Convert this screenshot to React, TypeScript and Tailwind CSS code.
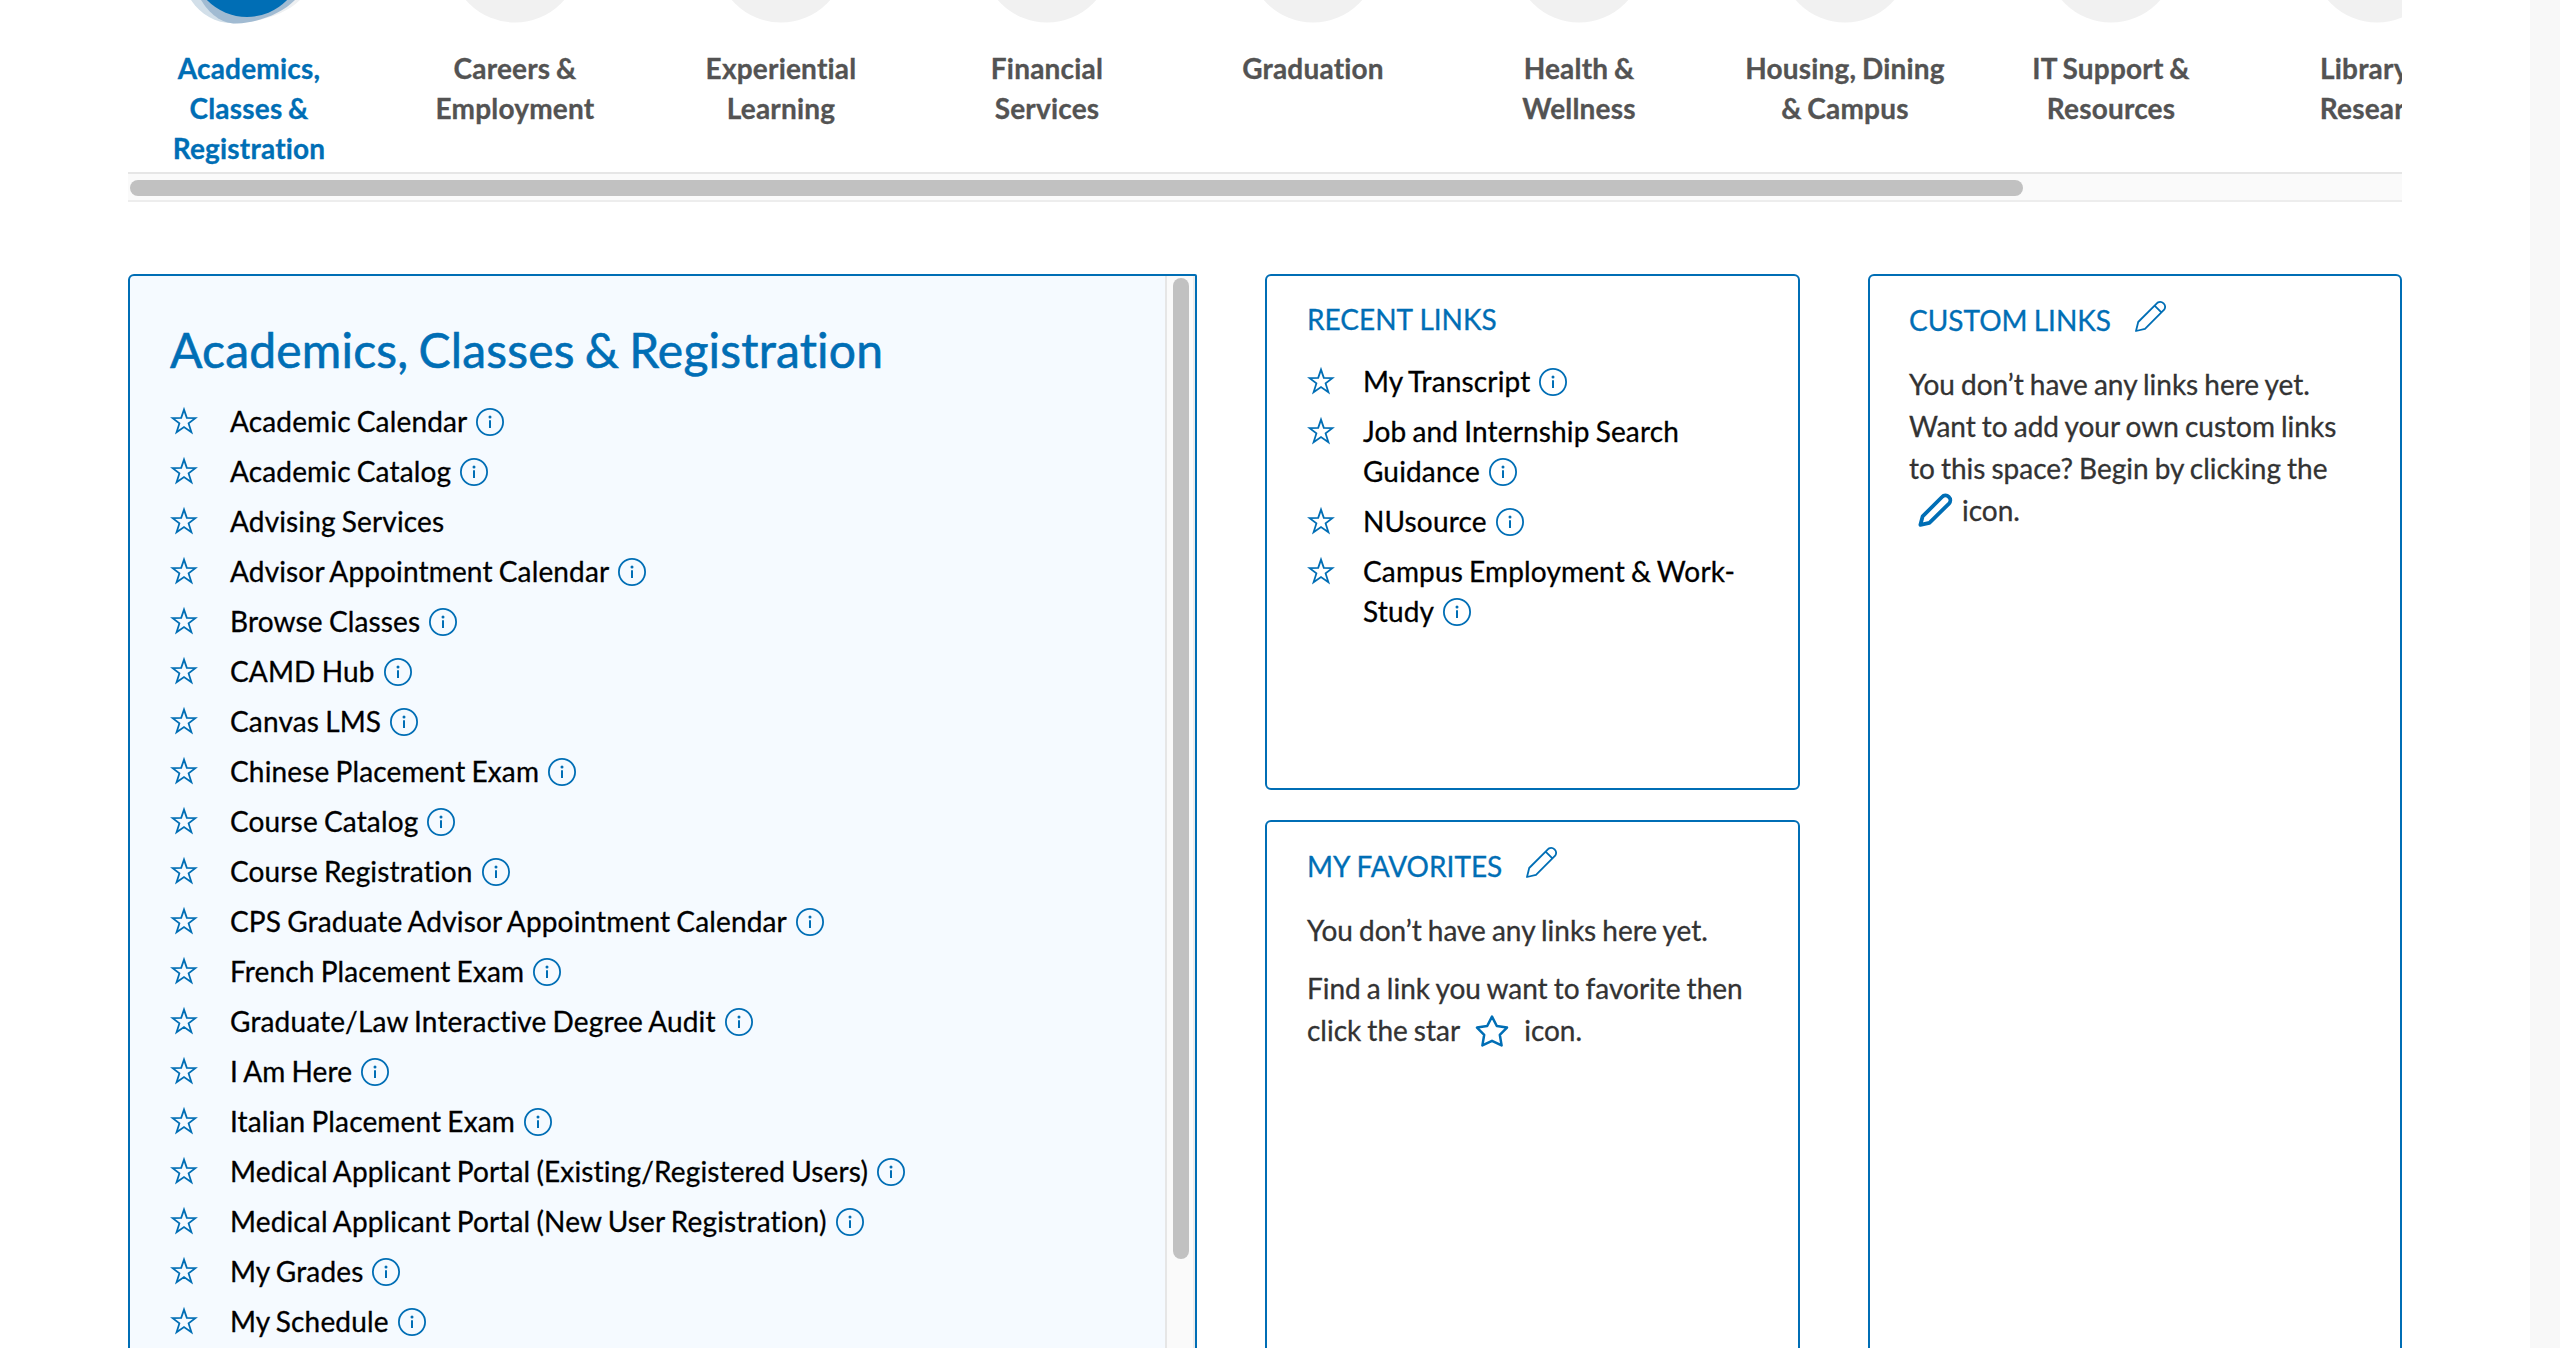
import React from "react";

const tabs = [
  ["Academics,", "Classes &", "Registration"],
  ["Careers &", "Employment"],
  ["Experiential", "Learning"],
  ["Financial", "Services"],
  ["Graduation"],
  ["Health &", "Wellness"],
  ["Housing, Dining", "& Campus"],
  ["IT Support &", "Resources"],
  ["Library &", "Research"],
];

const links: [string, boolean][] = [
  ["Academic Calendar", true],
  ["Academic Catalog", true],
  ["Advising Services", false],
  ["Advisor Appointment Calendar", true],
  ["Browse Classes", true],
  ["CAMD Hub", true],
  ["Canvas LMS", true],
  ["Chinese Placement Exam", true],
  ["Course Catalog", true],
  ["Course Registration", true],
  ["CPS Graduate Advisor Appointment Calendar", true],
  ["French Placement Exam", true],
  ["Graduate/Law Interactive Degree Audit", true],
  ["I Am Here", true],
  ["Italian Placement Exam", true],
  ["Medical Applicant Portal (Existing/Registered Users)", true],
  ["Medical Applicant Portal (New User Registration)", true],
  ["My Grades", true],
  ["My Schedule", true],
];

const recent = [
  ["My Transcript"],
  ["Job and Internship Search", "Guidance"],
  ["NUsource"],
  ["Campus Employment & Work-", "Study"],
];

function Star() {
  return (
    <svg className="mt-[5px] h-[30px] w-7 shrink-0" viewBox="0 0 28 30" fill="none" stroke="#006eb5" strokeWidth="1.8">
      <path d="M14 3.6 L16.8 11.9 L25.4 12.1 L18.6 17.4 L21.4 26.2 L14 21 L6.6 26.2 L9.4 17.4 L2.6 12.1 L11.2 11.9 Z" />
    </svg>
  );
}

function Info() {
  return (
    <svg className="ml-[9px] inline-block h-7 w-7 align-[-4px]" viewBox="0 0 28 28" fill="none">
      <circle cx="14" cy="14" r="13.1" stroke="#006eb5" strokeWidth="1.8" />
      <circle cx="14" cy="9" r="1.5" fill="#006eb5" />
      <path d="M14 12.3V20" stroke="#006eb5" strokeWidth="2" />
    </svg>
  );
}

function Pencil() {
  return (
    <svg className="h-8 w-8 shrink-0" viewBox="0 0 32 32" fill="none" stroke="#006eb5" strokeWidth="1.8" strokeLinejoin="round">
      <path d="M1 31 L3.2 22 L22.6 2.6 A5 5 0 0 1 29.4 9.4 L10 28.8 Z M19.6 5.6 L26.4 12.4" />
    </svg>
  );
}

function Row({ lines, info, narrow }: { lines: string[]; info: boolean; narrow?: boolean }) {
  return (
    <li className="mb-[10px] flex">
      <Star />
      <span className={narrow ? "ml-7 whitespace-nowrap leading-[40px] text-black" : "ml-8 whitespace-nowrap leading-[40px] text-black"}>
        {lines.map((l, i) => (
          <span key={l} className="block">
            {l}
            {info && i === lines.length - 1 && <Info />}
          </span>
        ))}
      </span>
    </li>
  );
}

export default function App() {
  return (
    <div className="flex h-[1348px] w-[2560px] overflow-hidden bg-white font-['Lato',sans-serif] text-[28px] text-[#333] [-webkit-text-stroke:0.3px] [font-variant-ligatures:none]">
      <main className="flex h-[1348px] w-[2530px] flex-col overflow-hidden pl-32">
        <div className="h-[172px] w-[2274px] shrink-0 overflow-hidden">
          <div className="flex w-[2420px] gap-6">
            {tabs.map((t, i) => (
              <div key={t[0]} className="flex w-[242px] shrink-0 flex-col items-center">
                <svg className="h-12 w-[140px]" viewBox="0 0 140 48">
                  {i === 0 ? (
                    <>
                      <path d="M12 0 C22 15 38 24 56 23.2 C78 22 98 12 110 0 Z" fill="#d2dfe9" />
                      <path d="M30 0 C40 15 52 24 66 22.5 C88 20 109 12 121 0 Z" fill="#eef0f2" />
                      <path d="M22 0 C30 13 42 24 58 23.6 C82 22 103 13 116 0 Z" fill="#a1bbd2" />
                      <circle cx="68" cy="-39" r="56" fill="#006eb5" />
                    </>
                  ) : (
                    <circle cx="70" cy="-42.5" r="65" fill="#f1f1f1" />
                  )}
                </svg>
                <div className={i === 0 ? "text-center font-bold leading-[40px] tracking-[0.2px] text-[#006eb5]" : "text-center font-bold leading-[40px] tracking-[0.2px] text-[#535353]"}>
                  {t.map((l) => (
                    <div key={l} className="whitespace-nowrap [word-spacing:-1.4px]">{l}</div>
                  ))}
                </div>
              </div>
            ))}
          </div>
        </div>
        <div className="flex h-[30px] w-[2274px] shrink-0 border-b-2 border-t-2 border-b-[#ededed] border-t-[#e6e6e6] bg-[#fafafa] pl-[2px] pt-[6px]">
          <div className="h-4 w-[1893px] rounded-full bg-[#c1c1c1]" />
        </div>

        <div className="mt-[72px] grid w-[2274px] shrink-0 grid-cols-[1069px_535px_534px] gap-[68px]">
          <section className="flex h-[1150px] justify-between rounded-tl-md rounded-tr-[2px] border-2 border-[#006eb5] bg-[#f5faff]">
            <div className="pl-10 pt-[42px]">
              <h2 className="text-[48px] leading-[64px] tracking-[0.2px] text-[#006eb5] [-webkit-text-stroke:0.6px] [word-spacing:-2.5px]">Academics, Classes &amp; Registration</h2>
              <ul className="mt-[19px] tracking-[0.15px] [word-spacing:-1.2px]">
                {links.map(([l, info]) => (
                  <Row key={l} lines={[l]} info={info} />
                ))}
              </ul>
            </div>
            <div className="w-[30px] border-l-2 border-r-2 border-l-[#e6e6e6] border-r-[#ededed] bg-[#fafafa] pl-[6px] pt-[2px]">
              <div className="h-[981px] w-4 rounded-full bg-[#c1c1c1]" />
            </div>
          </section>

          <div className="flex flex-col gap-[30px]">
            <section className="h-[516px] rounded-md border-2 border-[#006eb5] pl-10 pt-[23px]">
              <h3 className="leading-[40px] text-[#006eb5]">RECENT LINKS</h3>
              <ul className="mt-[22px] tracking-[0.15px] [word-spacing:-1.2px]">
                {recent.map((l) => (
                  <Row key={l[0]} lines={l} info narrow />
                ))}
              </ul>
            </section>
            <section className="h-[600px] rounded-md border-2 border-[#006eb5] pl-10 pt-[24px]">
              <h3 className="flex leading-[40px] text-[#006eb5]">
                <span className="mr-6">MY FAVORITES</span>
                <Pencil />
              </h3>
              <p className="mt-[23px] leading-[42px] [word-spacing:-1.1px]">You don’t have any links here yet.</p>
              <p className="mt-4 leading-[42px] [word-spacing:-1.1px]">
                Find a link you want to favorite then
                <br />
                click the star
                <svg className="mx-[15px] inline-block h-8 w-[34px] align-[-6px]" viewBox="0 0 34 32" fill="none" stroke="#006eb5" strokeWidth="2.5" strokeLinejoin="round">
                  <path d="M17 1.6 L21.8 11 L32 12.6 L24.8 19.8 L26.6 30.4 L17 25.8 L7.4 30.4 L9.2 19.8 L2 12.6 L12.2 11 Z" />
                </svg>
                icon.
              </p>
            </section>
          </div>

          <section className="h-[1150px] rounded-md border-2 border-[#006eb5] pl-[39px] pt-[24px]">
            <h3 className="flex leading-[40px] text-[#006eb5]">
              <span className="mr-6 [word-spacing:-1px]">CUSTOM LINKS</span>
              <Pencil />
            </h3>
            <p className="mt-[23px] leading-[42px] [word-spacing:-1.1px]">
              You don’t have any links here yet.
              <br />
              Want to add your own custom links
              <br />
              to this space? Begin by clicking the
              <br />
              <svg className="ml-[9px] mr-[9px] inline-block h-[34px] w-[35px] align-[-6px]" viewBox="0 0 35 34" fill="none" stroke="#006eb5" strokeWidth="3.8" strokeLinejoin="round">
                <path d="M2.4 31.8 L4.6 23.4 L24 4 A4.6 4.6 0 0 1 31 10.6 L11.4 29.8 Z" />
              </svg>
              icon.
            </p>
          </section>
        </div>
      </main>
      <aside className="h-full w-[30px] bg-[#f8f8f8]" />
    </div>
  );
}
